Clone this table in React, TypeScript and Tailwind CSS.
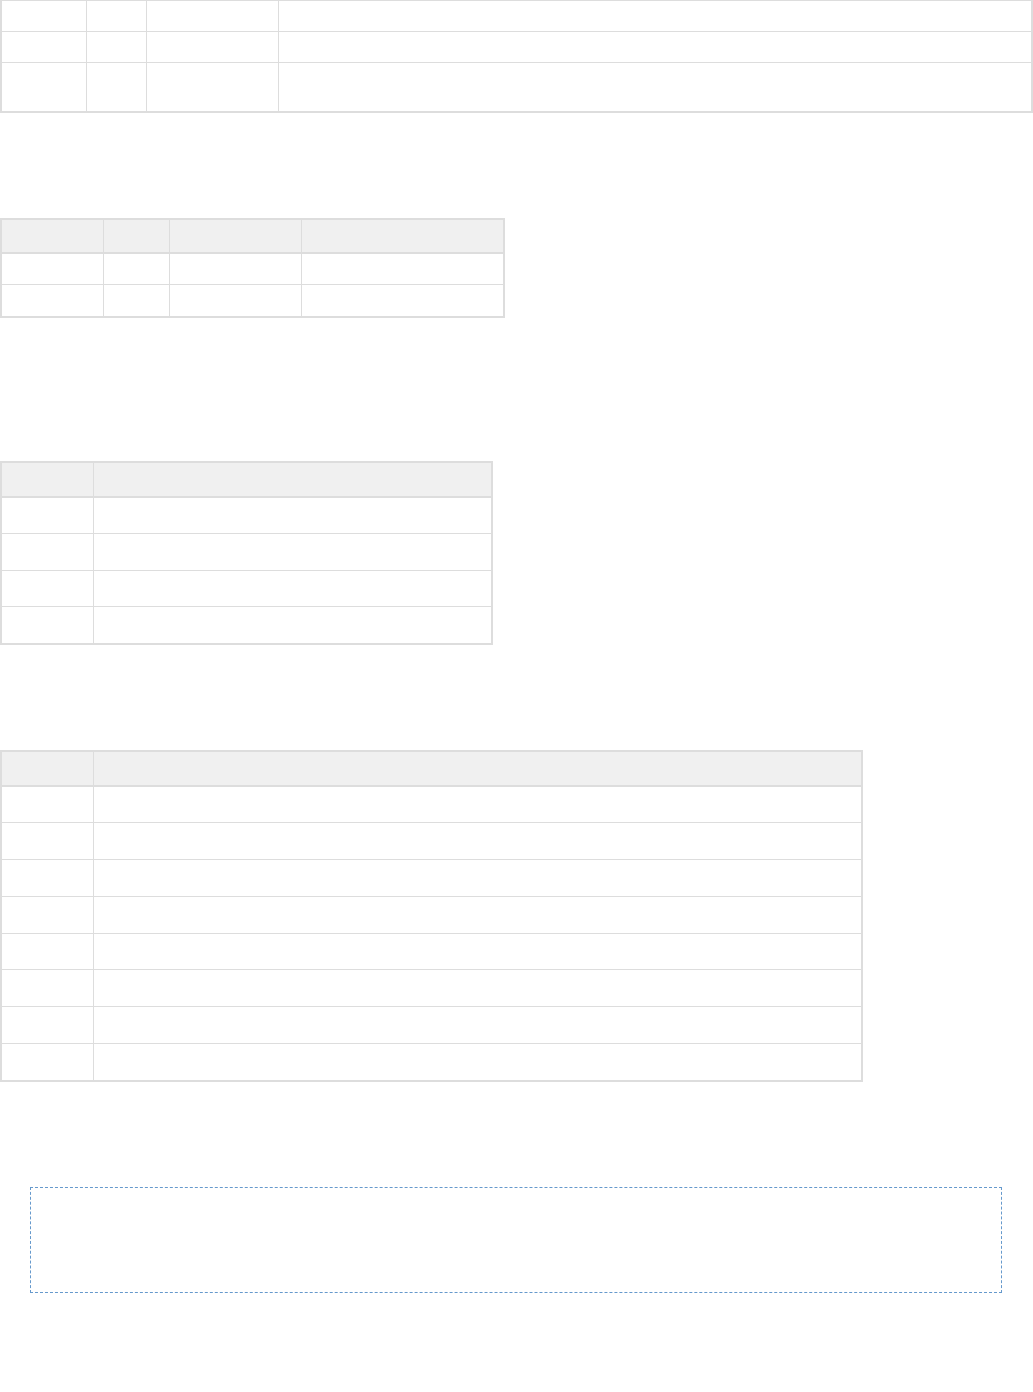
const cell = "border border-[#dddddd] p-0";

function Table({
  widths,
  rows,
  header,
  className,
}: {
  widths: string[];
  rows: string[];
  header?: string;
  className: string;
}) {
  return (
    <table className={`table-fixed border-collapse border-2 border-[#dddddd] ${className}`}>
      <colgroup>
        {widths.map((w, i) => (
          <col key={i} className={w} />
        ))}
      </colgroup>
      {header && (
        <thead>
          <tr className={`${header} bg-[#f0f0f0]`}>
            {widths.map((_, i) => (
              <th key={i} className={`${cell} border-b-2`} />
            ))}
          </tr>
        </thead>
      )}
      <tbody>
        {rows.map((h, r) => (
          <tr key={r} className={h}>
            {widths.map((_, i) => (
              <td key={i} className={cell} />
            ))}
          </tr>
        ))}
      </tbody>
    </table>
  );
}

export default function App() {
  return (
    <div className="min-h-[1392px] bg-white font-['Liberation_Sans',sans-serif] text-sm text-[#333333]">
      <Table
        className="w-[1033px] border-t"
        widths={["w-[85px]", "w-[60px]", "w-[132px]", "w-auto"]}
        rows={["h-[31px]", "h-[31px]", "h-[49px]"]}
      />

      <Table
        className="mt-[105px] w-[505px]"
        widths={["w-[102px]", "w-[66px]", "w-[132px]", "w-auto"]}
        header="h-[34px]"
        rows={["h-[32px]", "h-[32px]"]}
      />

      <Table
        className="mt-[143px] w-[493px]"
        widths={["w-[92px]", "w-auto"]}
        header="h-[35px]"
        rows={["h-[37px]", "h-[37px]", "h-[36px]", "h-[37px]"]}
      />

      <Table
        className="mt-[105px] w-[863px]"
        widths={["w-[92px]", "w-auto"]}
        header="h-[35px]"
        rows={["h-[37px]", "h-[37px]", "h-[37px]", "h-[37px]", "h-[36px]", "h-[37px]", "h-[37px]", "h-[37px]"]}
      />

      <div className="mx-[30px] mt-[105px] mr-[31px] h-[106px] border border-dashed border-[#6699cc]" />
    </div>
  );
}
